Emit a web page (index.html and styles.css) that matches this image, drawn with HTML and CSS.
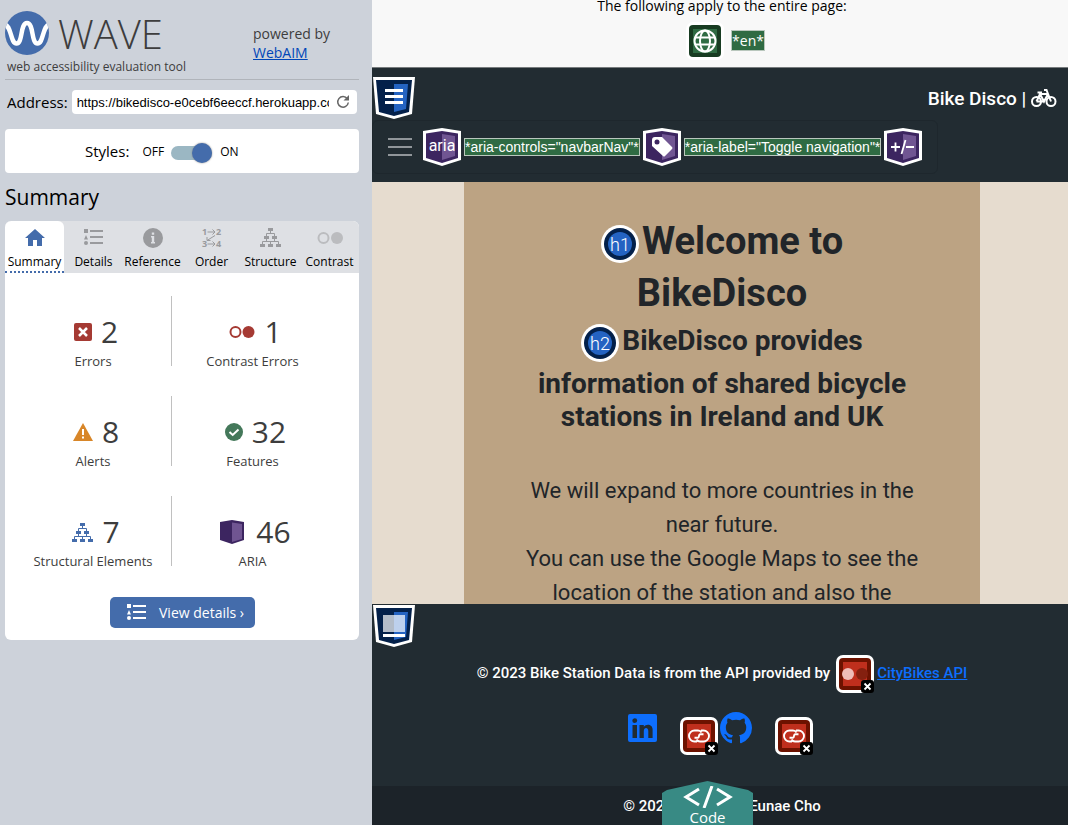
FILE: index.html
```html
<!DOCTYPE html>
<html lang="en">
<head>
<meta charset="utf-8">
<title>WAVE report of Bike Disco</title>
<link rel="stylesheet" href="styles.css">
</head>
<body>
<svg class="defs" width="0" height="0" aria-hidden="true">
  <symbol id="list" viewBox="0 0 19 17"><path d="M0 0h4v4H0zM2 6l2 4.500H0z"/><circle cx="2" cy="14" r="2"/><path d="M6 1h13v2H6zM6 7h13v2H6zM6 13h13v2H6z"/></symbol>
  <symbol id="tree" viewBox="0 0 21 19"><path d="M8 0h5v3H8zM4 8h5v3H4zM12 8h5v3h-5zM0 16h5v3H0zM8 16h5v3H8zM16 16h5v3h-5z"/><path d="M10.500 3v2.500M6.500 8V5.500h8V8M6.500 11v2.500M14.500 11v2.500M2.500 16v-2.500h16V16M10.500 13.500V16" fill="none" stroke="currentColor"/></symbol>
  <symbol id="aria" viewBox="0 0 38 38"><path fill="#fff" d="M0 3 19 0l19 3v29l-19 6L0 32z"/><path fill="#3c2560" d="M3 5.500 19 3l16 2.500V30l-16 5-16-5z"/><path fill="#705592" d="M19 6l13 2v20l-13 4z"/></symbol>
  <symbol id="shield" viewBox="0 0 42 42"><path fill="#fff" d="M0 0h42l-3 37-18 5-18-5z"/><path fill="#03204a" d="M3 3h36l-3 32-15 4-15-4z"/><path fill="#2463c2" d="M21 7h14l-2 25-12 3z"/></symbol>
  <symbol id="err" viewBox="0 0 38 38"><rect width="38" height="38" rx="7" fill="#fff"/><rect x="3" y="3" width="32" height="32" rx="4" fill="#6d1200"/><path fill="#bf2f1d" d="M7 7h24v24H7z"/></symbol>
  <symbol id="cross" viewBox="0 0 38 38"><rect x="25" y="25" width="13" height="13" rx="3"/><path d="M28.500 28.500l6 6m0-6l-6 6" stroke="#fff" stroke-width="1.800"/></symbol>
  <symbol id="chain" viewBox="0 0 38 38"><g fill="none" stroke="#fff" stroke-width="1.900"><path d="M23.500 17.300h-3a1.500 1.500 0 0 0-1.300 2.200M14.500 20.700h3a1.500 1.500 0 0 0 1.300-2.200"/><path d="M17 24.500h-2.500a5.500 5.500 0 0 1 0-11h3.500q2.500 0 3.500 2"/><path d="M21 13.500h2.500a5.500 5.500 0 0 1 0 11H20q-2.500 0-3.500-2"/></g></symbol>
</svg>
<div class="app">
  <aside class="sidebar">
    <header class="brand">
      <div>
        <div class="logo">
          <svg width="44" height="44" viewBox="0 0 44 44" aria-hidden="true"><defs><clipPath id="disc"><circle cx="22" cy="22" r="22"/></clipPath></defs><circle cx="22" cy="22" r="22" fill="#446cab"/><path clip-path="url(#disc)" d="M-2 13C7 13 5 32.500 11.500 32.500S15 12 22 12s4 20.500 10.500 20.500S37 13 46 13" fill="none" stroke="#fff" stroke-width="4.500"/></svg>
          <span class="wordmark">WAVE</span>
        </div>
        <p class="tagline">web accessibility evaluation tool</p>
      </div>
      <p class="powered">powered by<br><a href="#">WebAIM</a></p>
    </header>
    <form class="address">
      <label for="url">Address:</label>
      <span class="field">
        <input id="url" type="text" value="https://bikedisco-e0cebf6eeccf.herokuapp.com/">
        <button type="button" class="plain" aria-label="Reload"><svg width="14" height="14" viewBox="0 0 14 14"><path d="M11.300 3.700A5.300 5.300 0 1 0 12.300 7.500" fill="none" stroke="#666" stroke-width="1.500"/><path d="M13 0v5.500H7.500z" fill="#666"/></svg></button>
      </span>
    </form>
    <div class="styles">
      <span class="styles-name" id="styles-name">Styles:</span>
      <span>OFF</span>
      <input type="checkbox" role="switch" class="switch" aria-labelledby="styles-name" checked>
      <span>ON</span>
    </div>
    <h2 class="title">Summary</h2>
    <section class="panel">
      <nav class="tabs">
        <button type="button" class="tab active"><svg width="20" height="18" viewBox="0 0 20 18"><path d="M10 0l10 9h-3v8h-5v-6H8v6H3V9H0z"/></svg>Summary</button>
        <button type="button" class="tab"><svg width="19" height="17"><use href="#list"/></svg>Details</button>
        <button type="button" class="tab"><svg width="20" height="20" viewBox="0 0 20 20"><circle cx="10" cy="10" r="10"/><path fill="#dee0e4" d="M8.800 4.500h2.400v2.200H8.800zM8 8h3.200v6H12v1.500H8V14h.8V9.500H8z"/></svg>Reference</button>
        <button type="button" class="tab"><svg width="20" height="20" viewBox="0 0 20 20"><g class="digits"><text x="0" y="7">1</text><text x="14" y="7">2</text><text x="0" y="19">3</text><text x="14" y="19">4</text></g><path d="M5.500 4H13M10.500 1.500L13 4l-2.500 2.500M5.500 16H13M10.500 13.500L13 16l-2.500 2.500M13 7.500l-8 5M5 9v3.500h3.500" fill="none" stroke="currentColor"/></svg>Order</button>
        <button type="button" class="tab"><svg width="21" height="19"><use href="#tree"/></svg>Structure</button>
        <button type="button" class="tab light"><svg width="26" height="20" viewBox="0 0 26 20"><circle cx="6.500" cy="10" r="5" fill="none" stroke="currentColor" stroke-width="2"/><circle cx="20" cy="10" r="6"/></svg>Contrast</button>
      </nav>
      <dl class="stats">
        <div class="stat"><dd><svg width="18" height="18" viewBox="0 0 18 18"><rect width="18" height="18" rx="2" fill="#a53a33"/><path d="M5 5l8 8m0-8l-8 8" stroke="#fff" stroke-width="2.500"/></svg>2</dd><dt>Errors</dt></div>
        <div class="stat"><dd><svg width="26" height="18" viewBox="0 0 26 18"><circle cx="6.500" cy="9" r="5" fill="none" stroke="#a53a33" stroke-width="2"/><circle cx="19.500" cy="9" r="6" fill="#a53a33"/></svg>1</dd><dt>Contrast Errors</dt></div>
        <div class="stat"><dd><svg width="20" height="18" viewBox="0 0 20 18"><path fill="#d88628" d="M10 0l10 18H0z"/><path fill="#fff" d="M9 6h2v6H9zM9 13.500h2v2H9z"/></svg>8</dd><dt>Alerts</dt></div>
        <div class="stat"><dd><svg width="18" height="18" viewBox="0 0 18 18"><circle cx="9" cy="9" r="9" fill="#44785a"/><path d="M4.500 9l3.200 3 5.800-5.500" fill="none" stroke="#fff" stroke-width="2"/></svg>32</dd><dt>Features</dt></div>
        <div class="stat"><dd><svg class="blue" width="21" height="19"><use href="#tree"/></svg>7</dd><dt>Structural Elements</dt></div>
        <div class="stat"><dd><svg class="wide" width="24" height="24" viewBox="0 0 24 24"><path fill="#3c2560" d="M0 2l12-2 12 2v18l-12 4L0 20z"/><path fill="#705592" d="M12 2.500l10 1.500v15l-10 3z"/></svg>46</dd><dt>ARIA</dt></div>
      </dl>
      <button type="button" class="details"><svg width="19" height="17"><use href="#list"/></svg>View details ›</button>
    </section>
  </aside>

  <main class="page">
    <section class="pagewide">
      <p>The following apply to the entire page:</p>
      <div class="lang">
        <svg width="38" height="38" viewBox="0 0 38 38"><rect width="38" height="38" rx="7" fill="#fff"/><rect x="3" y="3" width="32" height="32" rx="4" fill="#183c22"/><path fill="#2f6b43" d="M7 7h24v24H7z"/><g fill="none" stroke="#fff" stroke-width="2"><circle cx="19" cy="19" r="10.500"/><ellipse cx="19" cy="19" rx="5" ry="10.500"/><path d="M9 15.500h20M9 22.500h20"/></g></svg>
        <mark>*en*</mark>
      </div>
    </section>

    <header class="navbar">
      <div class="navtop">
        <svg width="42" height="42" viewBox="0 0 42 42"><use href="#shield"/><path fill="#fff" d="M12 12h18v3H12zM12 18h18v3H12zM12 24h18v3H12z"/></svg>
        <a class="site" href="#">Bike Disco | <svg width="26" height="18" viewBox="0 0 26 18"><g fill="none" stroke="#fff" stroke-width="2"><circle cx="5.500" cy="12.500" r="4.500"/><circle cx="20" cy="12.500" r="4.500"/><path d="M5.500 12.500L9 5h8l3 7.500M9 5l4 7.500L17 5M13 12.500H5.500M6.500 3.500H11M17 5l-1.500-4H13"/></g></svg></a>
      </div>
      <button type="button" class="toggler" aria-label="Toggle navigation">
        <svg class="bars" width="24" height="20" viewBox="0 0 24 20"><path d="M0 2h24M0 10h24M0 18h24" stroke="#91969a" stroke-width="2"/></svg>
        <svg width="38" height="38" viewBox="0 0 38 38"><use href="#aria"/><text class="glyph small" x="19" y="23">aria</text></svg>
        <mark>*aria-controls="navbarNav"*</mark>
        <svg width="38" height="38" viewBox="0 0 38 38"><use href="#aria"/><path fill="#fff" d="M9 12q0-3 3-3h7l10 10q1 1 0 2l-7 7q-1 1-2 0L9 18z"/><circle cx="14" cy="14" r="2.500" fill="#3c2560"/></svg>
        <mark>*aria-label="Toggle navigation"*</mark>
        <svg width="38" height="38" viewBox="0 0 38 38"><use href="#aria"/><path d="M7 19h9M11.500 14.500v9M22 19h8M21.500 12l-4 14" stroke="#fff" stroke-width="1.800"/></svg>
      </button>
    </header>

    <section class="hero">
      <div class="card">
        <h1><svg class="badge" width="38" height="38" viewBox="0 0 38 38"><circle cx="19" cy="19" r="19" fill="#fff"/><circle cx="19" cy="19" r="16" fill="#03204a"/><circle cx="19" cy="19" r="12" fill="#2463c2"/><text class="glyph" x="19" y="26">h1</text></svg>Welcome to<br>BikeDisco</h1>
        <h2><svg class="badge" width="38" height="38" viewBox="0 0 38 38"><circle cx="19" cy="19" r="19" fill="#fff"/><circle cx="19" cy="19" r="16" fill="#03204a"/><circle cx="19" cy="19" r="12" fill="#2463c2"/><text class="glyph" x="19" y="26">h2</text></svg>BikeDisco provides<br>information of shared bicycle<br>stations in Ireland and UK</h2>
        <p>We will expand to more countries in the<br>near future.<br>You can use the Google Maps to see the<br>location of the station and also the</p>
      </div>
    </section>

    <footer class="footer">
      <svg class="footmark" width="42" height="42" viewBox="0 0 42 42"><use href="#shield"/><path fill="#fff" fill-opacity=".7" d="M10 10h22v17H10z"/><path fill="#fff" d="M10 29h22v3H10z"/></svg>
      <p class="credit">© 2023 Bike Station Data is from the API provided by <svg width="38" height="38" viewBox="0 0 38 38"><use href="#err"/><circle cx="12" cy="19" r="6" fill="#eebdb8"/><circle cx="26" cy="19" r="6" fill="#84200f"/><use href="#cross"/></svg><a href="#">CityBikes API</a></p>
      <div class="social">
        <a href="#" aria-label="LinkedIn"><svg width="29" height="28" viewBox="0 0 29 28"><path fill="#0d6efd" fill-rule="evenodd" d="M2 0h25q2 0 2 2v24q0 2-2 2H2q-2 0-2-2V2q0-2 2-2zM4.500 11v13H9V11zM6.700 4.200a2.400 2.400 0 1 0 .1 4.900 2.400 2.400 0 0 0-.1-4.900zM11.500 11v13h4.300v-7c0-4 4.500-4 4.500 0v7h4.300v-8.500c0-5.500-6.500-6-8.800-2.700V11z"/></svg></a>
        <svg class="low" width="38" height="38" viewBox="0 0 38 38"><use href="#err"/><use href="#chain"/><use href="#cross"/></svg>
        <a class="hub" href="#" aria-label="GitHub"><svg width="32" height="32" viewBox="0 0 16 16"><path fill="#0d6efd" d="M8 0C3.580 0 0 3.580 0 8c0 3.540 2.290 6.530 5.470 7.590.4.070.55-.17.55-.38 0-.19-.01-.82-.01-1.490-2.010.37-2.530-.49-2.690-.94-.09-.23-.48-.94-.82-1.130-.28-.15-.68-.52-.01-.53.63-.01 1.080.58 1.230.82.72 1.210 1.870.87 2.330.66.07-.52.28-.87.51-1.070-1.780-.2-3.640-.89-3.640-3.950 0-.87.31-1.590.82-2.150-.08-.2-.36-1.020.08-2.120 0 0 .67-.21 2.200.82.64-.18 1.320-.27 2-.27s1.360.09 2 .27c1.530-1.040 2.200-.82 2.200-.82.44 1.100.16 1.920.08 2.120.51.56.82 1.270.82 2.150 0 3.070-1.870 3.750-3.650 3.950.29.25.54.73.54 1.480 0 1.070-.01 1.930-.01 2.200 0 .21.15.46.55.38A8.010 8.010 0 0 0 16 8c0-4.420-3.580-8-8-8z"/></svg></a>
        <svg class="low" width="38" height="38" viewBox="0 0 38 38"><use href="#err"/><use href="#chain"/><use href="#cross"/></svg>
      </div>
      <p class="copy">© 2023 Copyright: Eunae Cho</p>
    </footer>
    <button type="button" class="code"><svg width="50" height="22" viewBox="0 0 50 22"><path d="M16 3L3 11l13 8M34 3l13 8-13 8M29 0l-8 22" fill="none" stroke="#fff" stroke-width="3"/></svg>Code</button>
  </main>
</div>
</body>
</html>
```
FILE: styles.css
```css
* { box-sizing: border-box; }
body { margin: 0; font-family: "Open Sans", sans-serif; color: #000; }
h1, h2, p, dl, dd, dt { margin: 0; }
button { font: inherit; color: inherit; border: 0; background: none; padding: 0; }
svg { flex: none; }
.defs { position: absolute; }
.app { display: flex; height: 100vh; overflow: hidden; }

.sidebar { flex: none; width: 372px; padding: 10px 13px 0 5px; background: #cdd2da; }
.brand { display: flex; justify-content: space-between; height: 70px; border-bottom: 1px solid #b0b4ba; color: #3d3d3d; }
.logo { display: flex; align-items: center; gap: 9px; height: 46px; }
.wordmark { padding-top: 2px; font-size: 40px; font-weight: 300; line-height: 40px; }
.tagline { padding-left: 2px; font-size: 12px; line-height: 22px; }
.powered { width: 106px; padding-top: 14px; font-size: 14px; line-height: 19px; }
.powered a { color: #0046b8; }
.address { display: flex; align-items: center; gap: 4px; padding: 10px 2px 0; font-size: 15px; line-height: 24px; }
.field { display: flex; align-items: center; flex: 1; min-width: 0; height: 24px; padding: 0 7px 0 5px; border-radius: 4px; background: #fff; }
.field input { flex: 1; min-width: 0; margin-right: 7px; padding: 0; border: 0; font: 13px "Liberation Sans", sans-serif; background: none; }
.plain { display: flex; }
.styles { display: flex; align-items: center; height: 44px; margin-top: 15px; padding-left: 80px; border-radius: 4px; background: #fff; font-size: 12px; gap: 5px; }
.styles-name { margin-right: 8px; font-size: 15px; }
.switch { appearance: none; position: relative; width: 41px; height: 14px; margin: 3px 3px 0 2px; border-radius: 7px; background: #9bb7c3; }
.switch::after { content: ""; position: absolute; right: 0; top: -3px; width: 20px; height: 20px; border-radius: 50%; background: #446cab; box-shadow: 0 0 2px #888; }
.title { margin: 8px 0; font-size: 21px; font-weight: 400; line-height: 32px; }

.panel { border-radius: 6px; background: #fff; padding-bottom: 12px; overflow: hidden; }
.tabs { display: grid; grid-template-columns: repeat(6, 1fr); background: #dee0e4; }
.tab { display: grid; grid-template-rows: 33px 16px; align-content: start; place-items: center; height: 52px; font-size: 12px; line-height: 16px; border-bottom: 2px solid transparent; white-space: nowrap; }
.tab svg { fill: #999a9d; color: #999a9d; overflow: visible; }
.tab.light svg { fill: #bbbcbf; color: #bbbcbf; }
.tab.active { background: #fff; border-radius: 6px 6px 0 0; border-bottom: 2px dotted #446cab; }
.tab.active svg { fill: #446cab; }
.digits { font: bold 9px "Open Sans", sans-serif; }
.stats { display: grid; grid-template-columns: 157fr 161fr; row-gap: 30px; padding: 23px 26px 0 10px; color: #3d3d3d; text-align: center; }
.stat { display: flex; flex-direction: column-reverse; justify-content: flex-end; height: 70px; padding-top: 16px; }
.stat:nth-child(odd) { border-right: 1px solid #c0c0c0; }
.stats dd { order: 1; display: flex; justify-content: center; align-items: center; gap: 9px; height: 40px; padding-left: 6px; font-size: 30px; line-height: 40px; }
.stats dt { font-size: 13px; line-height: 18px; }
.blue { fill: #446cab; color: #446cab; }
.wide { margin-right: 3px; }
.details { display: flex; align-items: center; gap: 13px; height: 31px; margin: 31px auto 0 105px; padding: 0 11px 1px 17px; border-radius: 5px; background: #446cab; color: #fff; font-size: 14px; }
.details svg { fill: #fff; }

.page { position: relative; display: flex; flex-direction: column; flex: 1; min-width: 0; color: #212529; font-family: Roboto, sans-serif; }
.pagewide { height: 68px; padding-left: 4px; border-bottom: 1px solid #777b7d; background: #f8f8f8; color: #000; font: 14px/19px "Open Sans", sans-serif; text-align: center; }
.pagewide p { margin-top: -4px; }
.lang { display: flex; justify-content: center; align-items: center; gap: 7px; height: 51px; padding-left: 7px; }
mark { border: 1px solid #b9c7bd; background: #2f6b43; color: #fff; white-space: nowrap; }
.navbar { height: 114px; padding: 9px 0 0; background: #222c32; }
.navtop { display: flex; justify-content: space-between; height: 43px; padding: 0 11px 0 1px; }
.site { color: #fff; font-size: 19px; font-weight: 500; line-height: 44px; text-decoration: none; }
.site svg { vertical-align: -2px; }
.toggler { display: flex; align-items: center; width: 566px; height: 54px; padding-left: 15px; border: 1px solid #1e272d; border-radius: 6px; gap: 3px; }
.bars { margin-right: 8px; }
.toggler mark { font: 14px/16px "Liberation Sans", sans-serif; }
.glyph { fill: #fff; font: 300 18px Roboto, sans-serif; text-anchor: middle; }
.glyph.small { font-size: 16px; font-weight: 400; }

.hero { flex: 1; min-height: 0; overflow: hidden; padding: 0 88px 0 92px; background: #e6dccf; }
.card { height: 100%; padding-top: 34px; background: #bca383; text-align: center; white-space: nowrap; }
.card h1 { font-size: 38px; line-height: 51px; }
.card h2 { font-size: 28px; line-height: 33px; }
.card p { margin-top: 41px; font-size: 22px; line-height: 34px; }
.badge { margin: 5px 3px 5px 0; vertical-align: middle; }

.footer { position: relative; background: #222c32; color: #fff; font: 500 15px Roboto, sans-serif; text-align: center; }
.footmark { position: absolute; left: 1px; top: 1px; }
.credit { display: flex; justify-content: center; padding: 51px 0 0 4px; line-height: 36px; }
.credit svg { margin: 0 3px 0 6px; }
.footer a { color: #0d6efd; }
.social { display: flex; justify-content: center; height: 93px; padding: 19px 0 0 3px; }
.social a { display: flex; align-items: center; height: 32px; }
.low { margin: 5px 2px 0 23px; }
.copy { height: 39px; padding-left: 4px; background: #1c2329; line-height: 41px; }
.code { position: absolute; left: calc(50% - 58px); bottom: 0; display: flex; flex-direction: column; align-items: center; width: 91px; height: 44px; padding-top: 5px; clip-path: polygon(0 12px, 5px 9px, 50% 0, 86px 9px, 100% 12px, 100% 100%, 0 100%); background: #388a84; color: #fff; font: 15px/18px "Open Sans", sans-serif; }
```
